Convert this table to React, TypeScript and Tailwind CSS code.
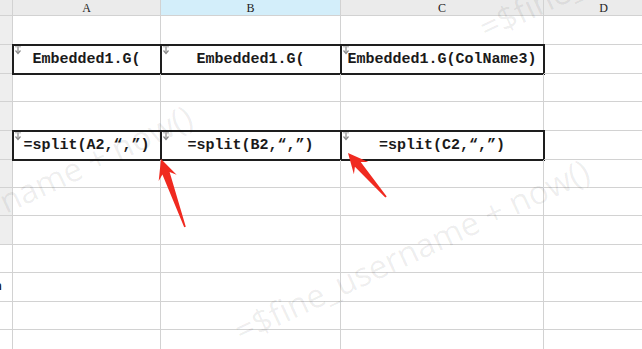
import React from 'react';

const cols = [
    { key: '', w: 'w-[13px]' },
    { key: 'A', w: 'w-[148px]' },
    { key: 'B', w: 'w-[180px]' },
    { key: 'C', w: 'w-[203px]' },
    { key: 'D', w: 'w-[120px]' },
];

const rowHeights = [
    'h-[29px]', 'h-[29px]', 'h-[28px]', 'h-[29px]', 'h-[29px]', 'h-[28px]',
    'h-[28px]', 'h-[29px]', 'h-[28px]', 'h-[29px]', 'h-[28px]', 'h-[29px]',
];

const cellText: Record<number, string[]> = {
    1: ['Embedded1.G(', 'Embedded1.G(', 'Embedded1.G(ColName3)'],
    4: ['=split(A2,“,”)', '=split(B2,“,”)', '=split(C2,“,”)'],
};

const ExpandMark = () => (
    <svg className="absolute left-[1px] top-[1px]" width="8" height="9" viewBox="0 0 8 9">
        <path d="M4 0.5V7" stroke="#8a8a8a" strokeWidth="1.2" />
        <path d="M1.5 4.5L4 7.5L6.5 4.5" fill="none" stroke="#8a8a8a" strokeWidth="1.2" />
        <path d="M1 0.8H7" stroke="#b0b0b0" strokeWidth="1" />
    </svg>
);

// tapered red annotation arrow, tip -> tail
const arrowPoints = (tx: number, ty: number, sx: number, sy: number) => {
    const len = Math.hypot(sx - tx, sy - ty);
    const dx = (sx - tx) / len;
    const dy = (sy - ty) / len;
    const nx = -dy;
    const ny = dx;
    const h = 20;
    const w = 9.5;
    const p = (a: number, b: number) => `${(tx + dx * a + nx * b).toFixed(1)},${(ty + dy * a + ny * b).toFixed(1)}`;
    return [p(0, 0), p(h, w), p(h - 5, 3.8), p(len, 0.9), p(len, -0.9), p(h - 5, -3.8), p(h, -w)].join(' ');
};

const Watermark = ({ className }: { className: string }) => (
    <div
        className={`pointer-events-none absolute origin-bottom-left -rotate-[25deg] whitespace-nowrap text-[33px] leading-none text-black/[0.07] ${className}`}
        style={{ fontFamily: '"Open Sans", sans-serif' }}
    >
        =$fine_username + now()
    </div>
);

export default function App() {
    return (
        <div className="relative h-[349px] w-[642px] overflow-hidden bg-white" style={{ fontFamily: '"Liberation Mono", monospace' }}>
            {/* column header */}
            <div className="flex h-[16px]">
                {cols.map((c) => (
                    <div
                        key={c.key || 'corner'}
                        className={`${c.w} shrink-0 border-b border-r border-[#d2d2d2] flex items-center justify-center text-[12px] leading-none text-[#222] ${c.key === 'B' ? 'bg-[#d3eefa]' : 'bg-[#ebebeb]'}`}
                        style={{ fontFamily: '"Liberation Serif", serif' }}
                    >
                        {c.key}
                    </div>
                ))}
            </div>

            {/* rows */}
            {rowHeights.map((h, r) => (
                <div key={r} className={`flex ${h}`}>
                    <div className={`w-[13px] shrink-0 border-b border-r border-[#d2d2d2] overflow-hidden flex items-center ${r < 8 ? 'bg-[#eeeeee]' : 'bg-white'}`}>
                        {r === 9 && <span className="-ml-[6px] text-[13px] font-bold text-[#222]">n</span>}
                        {r === 11 && <span className="-ml-[5px] -mt-[10px] text-[11px] text-[#222]">'</span>}
                    </div>
                    {cols.slice(1).map((c, i) => {
                        const text = cellText[r]?.[i];
                        return (
                            <div
                                key={c.key}
                                className={`${c.w} shrink-0 border-b border-r border-[#d2d2d2] relative flex items-center justify-center ${text ? 'outline-2 -outline-offset-1 outline-[#1e1e1e]' : ''}`}
                            >
                                {text && (
                                    <>
                                        <ExpandMark />
                                        <span className="whitespace-nowrap text-[15px] font-bold leading-none text-[#1a1a1a]">{text}</span>
                                    </>
                                )}
                            </div>
                        );
                    })}
                </div>
            ))}

            <Watermark className="left-[-154px] top-[260px]" />
            <Watermark className="left-[243px] top-[314px]" />
            <Watermark className="left-[488px] top-[11px]" />

            <svg className="pointer-events-none absolute left-0 top-0" width="642" height="349">
                <polygon points={arrowPoints(161, 159, 185, 227)} fill="#f02a20" />
                <polygon points={arrowPoints(348, 153, 386, 197)} fill="#f02a20" />
            </svg>
        </div>
    );
}
